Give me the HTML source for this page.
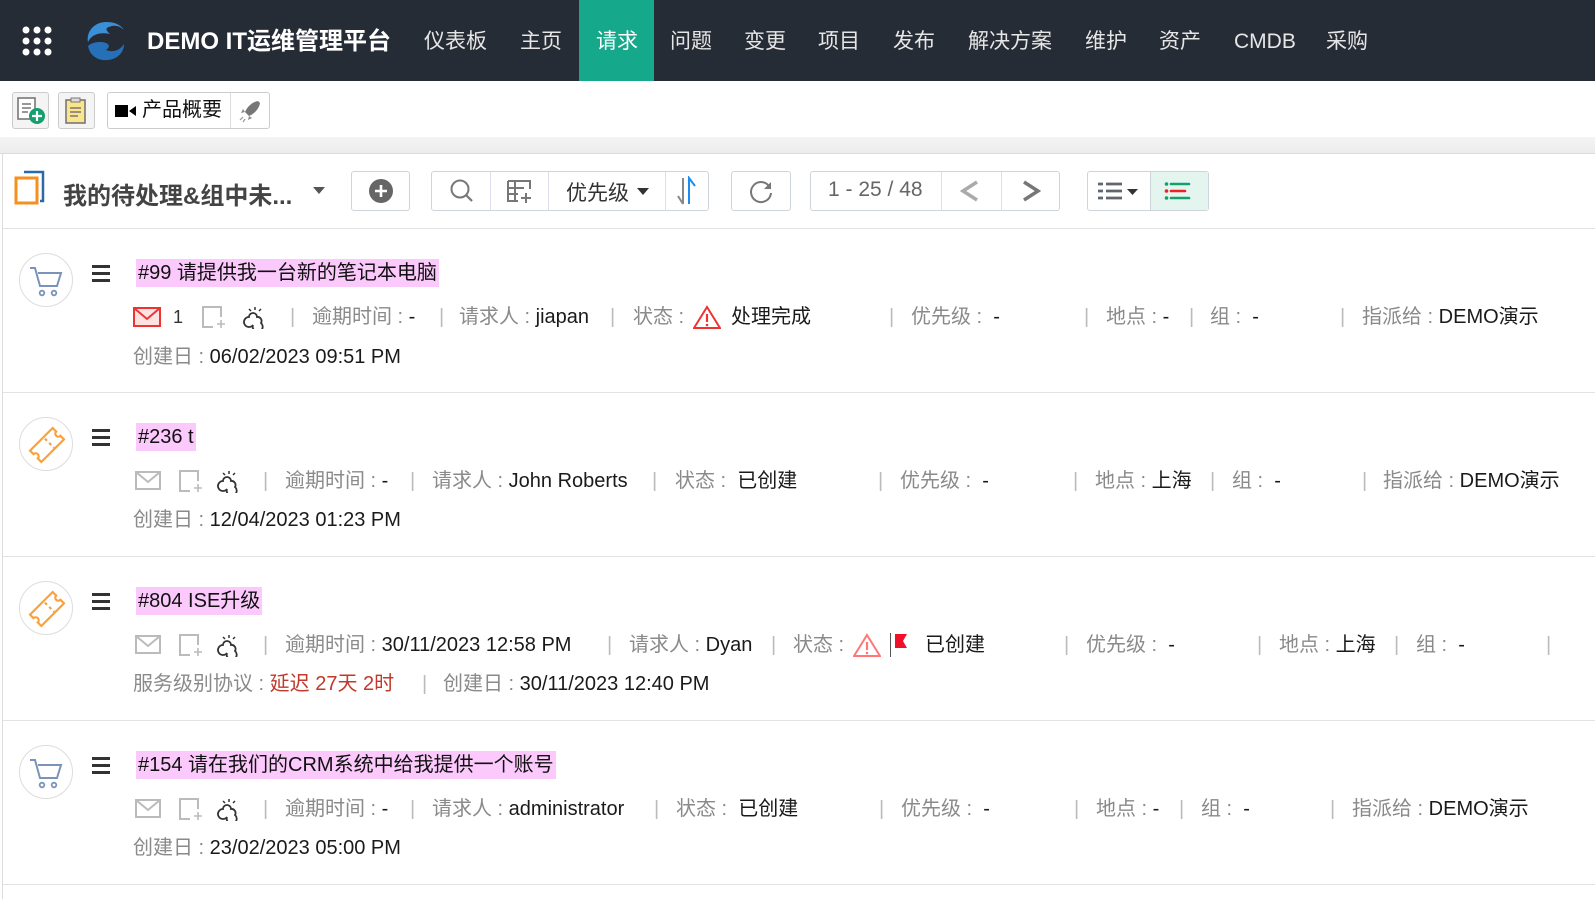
<!DOCTYPE html>
<html><head><meta charset="utf-8"><style>
*{margin:0;padding:0;box-sizing:border-box}
body{width:1595px;height:899px;overflow:hidden;background:#fff;font-family:"Liberation Sans","Noto Sans CJK SC",sans-serif;position:relative;color:#222}
.a{position:absolute;white-space:nowrap}
.nav{left:0;top:0;width:1595px;height:81px;background:#262c35}
.nv{top:0;height:81px;line-height:84px;color:#e6e6e6;font-size:21px}
.btn{position:absolute;border:1px solid #cfd4d9;border-radius:3px;background:#fff}
.m{font-size:20px;color:#8a8a8a;top:0}
.v{color:#1a1a1a}
.sep{color:#bbb}
.row{position:absolute;left:3px;width:1592px;height:164px;border-bottom:1px solid #e3e3e3}
.ic{position:absolute;left:16px;top:24px;width:54px;height:54px;border:1px solid #ddd;border-radius:50%}
.ham{position:absolute;left:89px;top:36px;width:18px}
.ham i{display:block;height:3px;background:#333;margin-bottom:4px}
.tt{position:absolute;left:133px;top:30px;background:#fbc9fb;font-size:20px;line-height:28px;padding:0 2px;color:#111}
.ln{position:absolute;left:0;height:28px;line-height:28px;width:1592px}
</style></head><body>
<div class="a nav"></div>
<svg class="a" style="left:22px;top:26px" width="30" height="30"><g fill="#fff"><circle cx="4" cy="4" r="3.5"/><circle cx="15" cy="4" r="3.5"/><circle cx="26" cy="4" r="3.5"/><circle cx="4" cy="15" r="3.5"/><circle cx="15" cy="15" r="3.5"/><circle cx="26" cy="15" r="3.5"/><circle cx="4" cy="26" r="3.5"/><circle cx="15" cy="26" r="3.5"/><circle cx="26" cy="26" r="3.5"/></g></svg>
<svg class="a" style="left:86px;top:20px" width="40" height="42"><path d="M20 2C8 2 0 12 2 22 6 14 14 12 24 14 20 10 18 8 26 6 32 5 36 8 38 10 34 4 28 2 20 2Z" fill="#3a8fd6"/><path d="M2 26C4 36 12 41 22 40 32 39 38 32 38 24 34 30 28 33 20 30 26 26 22 22 14 22 8 22 4 24 2 26Z" fill="#2670b8"/></svg>
<div class="a nv" style="left:147px;font-weight:bold;color:#fff;font-size:24px">DEMO IT运维管理平台</div>
<div class="a nv" style="left:424px">仪表板</div>
<div class="a nv" style="left:520px">主页</div>
<div class="a" style="left:579px;top:0;width:75px;height:81px;background:#15a88a"></div>
<div class="a nv" style="left:596px;color:#fff">请求</div>
<div class="a nv" style="left:670px">问题</div>
<div class="a nv" style="left:744px">变更</div>
<div class="a nv" style="left:818px">项目</div>
<div class="a nv" style="left:893px">发布</div>
<div class="a nv" style="left:968px">解决方案</div>
<div class="a nv" style="left:1085px">维护</div>
<div class="a nv" style="left:1159px">资产</div>
<div class="a nv" style="left:1234px">CMDB</div>
<div class="a nv" style="left:1326px">采购</div>

<div class="btn" style="left:12px;top:92px;width:37px;height:37px;background:#f4f4f4;border-color:#ccc"></div>
<svg class="a" style="left:16px;top:96px" width="32" height="30"><rect x="2" y="2" width="17" height="21" fill="#fff" stroke="#777" stroke-width="1.6"/><path d="M6 8h9M6 12h9M6 16h6" stroke="#777" stroke-width="1.5"/><circle cx="21" cy="20" r="8" fill="#13a06c"/><path d="M21 15v10M16 20h10" stroke="#fff" stroke-width="2.2"/></svg>
<div class="btn" style="left:58px;top:92px;width:37px;height:37px;background:#f4f4f4;border-color:#ccc"></div>
<svg class="a" style="left:64px;top:96px" width="24" height="30"><rect x="2" y="4" width="19" height="23" fill="#fbe58b" stroke="#777" stroke-width="1.6"/><rect x="7" y="2" width="9" height="4" fill="#ddd" stroke="#777"/><path d="M6 12h11M6 16h11M6 20h8" stroke="#777" stroke-width="1.5"/></svg>
<div class="btn" style="left:107px;top:92px;width:163px;height:37px;border-color:#ccc"></div>
<svg class="a" style="left:115px;top:104px" width="22" height="14"><rect x="0" y="1" width="13" height="12" fill="#000"/><path d="M14 7l7-5v10z" fill="#000"/></svg>
<div class="a" style="left:142px;top:97px;font-size:20px;line-height:26px;color:#111">产品概要</div>
<div class="a" style="left:230px;top:93px;width:1px;height:35px;background:#ddd"></div>
<svg class="a" style="left:238px;top:99px" width="24" height="24"><path d="M20 2C14 3 9 8 7 13l4 4c5-2 10-7 11-13z" fill="#777"/><path d="M7 13l-4 1 2-4zM11 17l-1 4 4-2z" fill="#888"/><path d="M5 18l-3 3M7 20l-2 3" stroke="#999" stroke-width="1.2"/></svg>

<div class="a" style="left:0;top:137px;width:1595px;height:17px;background:linear-gradient(#f4f4f4,#ececec);border-bottom:1px solid #ddd"></div>
<div class="a" style="left:2px;top:154px;width:1px;height:745px;background:#ddd"></div>

<svg class="a" style="left:14px;top:170px" width="32" height="36"><path d="M10 2h19v29h-3" fill="none" stroke="#2b6aa6" stroke-width="2.5"/><rect x="2" y="8" width="21" height="25" fill="#fff" stroke="#f5901e" stroke-width="3"/></svg>
<div class="a" style="left:63px;top:176px;font-size:24px;font-weight:bold;color:#444">我的待处理&amp;组中未...</div>
<svg class="a" style="left:313px;top:187px" width="12" height="8"><path d="M0 0h12L6 7z" fill="#555"/></svg>
<div class="btn" style="left:351px;top:171px;width:59px;height:40px"></div>
<svg class="a" style="left:368px;top:178px" width="26" height="26"><circle cx="13" cy="13" r="12" fill="#666"/><path d="M13 7v12M7 13h12" stroke="#fff" stroke-width="2.6"/></svg>
<div class="btn" style="left:431px;top:171px;width:278px;height:40px"></div>
<div class="a" style="left:490px;top:172px;width:1px;height:38px;background:#dde"></div>
<div class="a" style="left:548px;top:172px;width:1px;height:38px;background:#dde"></div>
<div class="a" style="left:665px;top:172px;width:1px;height:38px;background:#dde"></div>
<svg class="a" style="left:449px;top:178px" width="26" height="26"><circle cx="11" cy="11" r="8.5" fill="none" stroke="#777" stroke-width="2"/><path d="M17 17l6 6" stroke="#777" stroke-width="2.2"/></svg>
<svg class="a" style="left:506px;top:179px" width="28" height="26"><path d="M2 2h22v8M2 2v20h10M2 9h16M2 15h10M9 2v20" fill="none" stroke="#777" stroke-width="2"/><path d="M20 14v10M15 19h10" stroke="#777" stroke-width="2"/></svg>
<div class="a" style="left:566px;top:177px;font-size:21px;color:#333">优先级</div>
<svg class="a" style="left:637px;top:188px" width="12" height="8"><path d="M0 0h12L6 7z" fill="#333"/></svg>
<svg class="a" style="left:676px;top:176px" width="24" height="30"><path d="M7 2v26M7 28l-5-8" stroke="#888" stroke-width="2" fill="none"/><path d="M13 28V2l6 8" stroke="#1b8df0" stroke-width="2" fill="none"/></svg>
<div class="btn" style="left:731px;top:171px;width:60px;height:40px"></div>
<svg class="a" style="left:747px;top:178px" width="28" height="26"><path d="M22 8A10 10 0 1 0 24 15" fill="none" stroke="#777" stroke-width="2"/><path d="M24 4v7h-7z" fill="#777"/></svg>
<div class="btn" style="left:810px;top:171px;width:250px;height:40px"></div>
<div class="a" style="left:941px;top:172px;width:1px;height:38px;background:#dde"></div>
<div class="a" style="left:1001px;top:172px;width:1px;height:38px;background:#dde"></div>
<div class="a" style="left:828px;top:178px;font-size:21px;color:#666">1 - 25 / 48</div>
<svg class="a" style="left:959px;top:180px" width="22" height="22"><path d="M18 2L4 11l14 9" fill="none" stroke="#aaa" stroke-width="3.5"/></svg>
<svg class="a" style="left:1020px;top:180px" width="22" height="22"><path d="M4 2l14 9-14 9" fill="none" stroke="#777" stroke-width="3.5"/></svg>
<div class="btn" style="left:1087px;top:171px;width:122px;height:40px"></div>
<div class="a" style="left:1150px;top:172px;width:58px;height:38px;background:#e4f4ee;border-left:1px solid #cfd4d9"></div>
<svg class="a" style="left:1098px;top:181px" width="44" height="22"><path d="M0 3h5M8 3h16M0 10h5M8 10h16M0 17h5M8 17h16" stroke="#5f6670" stroke-width="2.8"/><path d="M29 8h11l-5.5 6z" fill="#333"/></svg>
<svg class="a" style="left:1164px;top:181px" width="28" height="22"><circle cx="2.5" cy="3" r="1.8" fill="#13a06c"/><circle cx="2.5" cy="10" r="1.8" fill="#f02020"/><circle cx="2.5" cy="17" r="1.8" fill="#13a06c"/><path d="M7 3h18M7 17h18" stroke="#13a06c" stroke-width="2.6" stroke-linecap="round"/><path d="M7 10h14" stroke="#f02020" stroke-width="2.6" stroke-linecap="round"/></svg>
<div class="a" style="left:3px;top:228px;width:1592px;height:1px;background:#e3e3e3"></div>

<!-- Row 1 -->
<div class="row" style="top:229px">
<div class="ic"><svg width="54" height="54"><path d="M10 14h5l5 18h17l4-13H18" fill="none" stroke="#7a93b8" stroke-width="2"/><circle cx="22" cy="39" r="2.3" fill="none" stroke="#7a93b8" stroke-width="1.8"/><circle cx="34" cy="39" r="2.3" fill="none" stroke="#7a93b8" stroke-width="1.8"/></svg></div>
<div class="ham"><i></i><i></i><i></i></div>
<div class="tt">#99 请提供我一台新的笔记本电脑</div>
<div class="ln" style="top:74px">
<svg class="a" style="left:130px;top:4px" width="30" height="22"><rect x="1" y="1" width="26" height="18" fill="#fde2e2" stroke="#e33" stroke-width="2"/><path d="M1 1l13 11L27 1" fill="none" stroke="#e33" stroke-width="2"/></svg>
<span class="a m" style="left:170px;color:#333;font-size:18px">1</span>
<svg class="a" style="left:198px;top:2px" width="28" height="26"><path d="M16 2H2v20h10M16 2h4v10" fill="none" stroke="#bbb" stroke-width="2"/><path d="M20 15v8M16 19h8" stroke="#bbb" stroke-width="1.6"/></svg>
<svg class="a" style="left:238px;top:2px" width="28" height="24"><path d="M8 12a5 5 0 1 0 4 8 5 5 0 1 0 8-2 4 4 0 0 0-4-6 4 4 0 0 0-8 0z" fill="none" stroke="#333" stroke-width="1.8"/><path d="M14 2v3M20 4l-2 2M8 4l2 2" stroke="#333" stroke-width="1.5"/></svg>
<span class="a m sep" style="left:287px">|</span>
<span class="a m" style="left:309px">逾期时间 : <span class="v">-</span></span>
<span class="a m sep" style="left:436px">|</span>
<span class="a m" style="left:456px">请求人 : <span class="v">jiapan</span></span>
<span class="a m sep" style="left:607px">|</span>
<span class="a m" style="left:630px">状态 :</span>
<svg class="a" style="left:690px;top:2px" width="28" height="24"><path d="M14 2L1 23h26z" fill="#fff" stroke="#e33" stroke-width="2"/><path d="M14 9v8" stroke="#e33" stroke-width="2.2"/><circle cx="14" cy="20" r="1.3" fill="#e33"/></svg>
<span class="a m v" style="left:728px">处理完成</span>
<span class="a m sep" style="left:886px">|</span>
<span class="a m" style="left:908px">优先级 :&nbsp; <span class="v">-</span></span>
<span class="a m sep" style="left:1081px">|</span>
<span class="a m" style="left:1103px">地点 : <span class="v">-</span></span>
<span class="a m sep" style="left:1186px">|</span>
<span class="a m" style="left:1207px">组 :&nbsp; <span class="v">-</span></span>
<span class="a m sep" style="left:1337px">|</span>
<span class="a m" style="left:1359px">指派给 : <span class="v">DEMO演示</span></span>
</div>
<div class="ln" style="top:114px"><span class="a m" style="left:130px">创建日 : <span class="v">06/02/2023 09:51 PM</span></span></div>
</div>

<!-- Row 2 -->
<div class="row" style="top:393px">
<div class="ic"><svg width="54" height="54"><g transform="rotate(-45 27 27)" fill="none" stroke="#f9a13c" stroke-width="2.2"><path d="M11 19h32v5a3 3 0 0 0 0 6v5H11v-5a3 3 0 0 0 0-6z"/><path d="M30 21v3M30 27v3M30 33v1" /></g></svg></div>
<div class="ham"><i></i><i></i><i></i></div>
<div class="tt">#236 t</div>
<div class="ln" style="top:74px">
<svg class="a" style="left:132px;top:4px" width="28" height="22"><rect x="1" y="1" width="24" height="17" fill="none" stroke="#bbb" stroke-width="2"/><path d="M1 1l12 10L25 1" fill="none" stroke="#bbb" stroke-width="2"/></svg>
<svg class="a" style="left:175px;top:2px" width="28" height="26"><path d="M16 2H2v20h10M16 2h4v10" fill="none" stroke="#bbb" stroke-width="2"/><path d="M20 15v8M16 19h8" stroke="#bbb" stroke-width="1.6"/></svg>
<svg class="a" style="left:212px;top:2px" width="28" height="24"><path d="M8 12a5 5 0 1 0 4 8 5 5 0 1 0 8-2 4 4 0 0 0-4-6 4 4 0 0 0-8 0z" fill="none" stroke="#333" stroke-width="1.8"/><path d="M14 2v3M20 4l-2 2M8 4l2 2" stroke="#333" stroke-width="1.5"/></svg>
<span class="a m sep" style="left:260px">|</span>
<span class="a m" style="left:282px">逾期时间 : <span class="v">-</span></span>
<span class="a m sep" style="left:407px">|</span>
<span class="a m" style="left:429px">请求人 : <span class="v">John Roberts</span></span>
<span class="a m sep" style="left:649px">|</span>
<span class="a m" style="left:672px">状态 :&nbsp; <span class="v">已创建</span></span>
<span class="a m sep" style="left:875px">|</span>
<span class="a m" style="left:897px">优先级 :&nbsp; <span class="v">-</span></span>
<span class="a m sep" style="left:1070px">|</span>
<span class="a m" style="left:1092px">地点 : <span class="v">上海</span></span>
<span class="a m sep" style="left:1207px">|</span>
<span class="a m" style="left:1229px">组 :&nbsp; <span class="v">-</span></span>
<span class="a m sep" style="left:1359px">|</span>
<span class="a m" style="left:1380px">指派给 : <span class="v">DEMO演示</span></span>
</div>
<div class="ln" style="top:113px"><span class="a m" style="left:130px">创建日 : <span class="v">12/04/2023 01:23 PM</span></span></div>
</div>

<!-- Row 3 -->
<div class="row" style="top:557px">
<div class="ic"><svg width="54" height="54"><g transform="rotate(-45 27 27)" fill="none" stroke="#f9a13c" stroke-width="2.2"><path d="M11 19h32v5a3 3 0 0 0 0 6v5H11v-5a3 3 0 0 0 0-6z"/><path d="M30 21v3M30 27v3M30 33v1" /></g></svg></div>
<div class="ham"><i></i><i></i><i></i></div>
<div class="tt">#804 ISE升级</div>
<div class="ln" style="top:74px">
<svg class="a" style="left:132px;top:4px" width="28" height="22"><rect x="1" y="1" width="24" height="17" fill="none" stroke="#bbb" stroke-width="2"/><path d="M1 1l12 10L25 1" fill="none" stroke="#bbb" stroke-width="2"/></svg>
<svg class="a" style="left:175px;top:2px" width="28" height="26"><path d="M16 2H2v20h10M16 2h4v10" fill="none" stroke="#bbb" stroke-width="2"/><path d="M20 15v8M16 19h8" stroke="#bbb" stroke-width="1.6"/></svg>
<svg class="a" style="left:212px;top:2px" width="28" height="24"><path d="M8 12a5 5 0 1 0 4 8 5 5 0 1 0 8-2 4 4 0 0 0-4-6 4 4 0 0 0-8 0z" fill="none" stroke="#333" stroke-width="1.8"/><path d="M14 2v3M20 4l-2 2M8 4l2 2" stroke="#333" stroke-width="1.5"/></svg>
<span class="a m sep" style="left:260px">|</span>
<span class="a m" style="left:282px">逾期时间 : <span class="v">30/11/2023 12:58 PM</span></span>
<span class="a m sep" style="left:604px">|</span>
<span class="a m" style="left:626px">请求人 : <span class="v">Dyan</span></span>
<span class="a m sep" style="left:768px">|</span>
<span class="a m" style="left:790px">状态 :</span>
<svg class="a" style="left:850px;top:2px" width="28" height="24"><path d="M14 2L1 23h26z" fill="#fff" stroke="#f77" stroke-width="2"/><path d="M14 9v8" stroke="#f77" stroke-width="2.2"/><circle cx="14" cy="20" r="1.3" fill="#f77"/></svg>
<div class="a" style="left:887px;top:2px;width:1px;height:24px;background:#555"></div>
<svg class="a" style="left:891px;top:2px" width="22" height="20"><path d="M1 1h12l-4 7 4 7H1z" fill="#f0102a"/></svg>
<span class="a m v" style="left:922px">已创建</span>
<span class="a m sep" style="left:1061px">|</span>
<span class="a m" style="left:1083px">优先级 :&nbsp; <span class="v">-</span></span>
<span class="a m sep" style="left:1254px">|</span>
<span class="a m" style="left:1276px">地点 : <span class="v">上海</span></span>
<span class="a m sep" style="left:1391px">|</span>
<span class="a m" style="left:1413px">组 :&nbsp; <span class="v">-</span></span>
<span class="a m sep" style="left:1543px">|</span>
</div>
<div class="ln" style="top:113px"><span class="a m" style="left:130px">服务级别协议 : <span style="color:#c0392b">延迟 27天 2时</span></span><span class="a m sep" style="left:419px">|</span><span class="a m" style="left:440px">创建日 : <span class="v">30/11/2023 12:40 PM</span></span></div>
</div>

<!-- Row 4 -->
<div class="row" style="top:721px">
<div class="ic"><svg width="54" height="54"><path d="M10 14h5l5 18h17l4-13H18" fill="none" stroke="#7a93b8" stroke-width="2"/><circle cx="22" cy="39" r="2.3" fill="none" stroke="#7a93b8" stroke-width="1.8"/><circle cx="34" cy="39" r="2.3" fill="none" stroke="#7a93b8" stroke-width="1.8"/></svg></div>
<div class="ham"><i></i><i></i><i></i></div>
<div class="tt">#154 请在我们的CRM系统中给我提供一个账号</div>
<div class="ln" style="top:74px">
<svg class="a" style="left:132px;top:4px" width="28" height="22"><rect x="1" y="1" width="24" height="17" fill="none" stroke="#bbb" stroke-width="2"/><path d="M1 1l12 10L25 1" fill="none" stroke="#bbb" stroke-width="2"/></svg>
<svg class="a" style="left:175px;top:2px" width="28" height="26"><path d="M16 2H2v20h10M16 2h4v10" fill="none" stroke="#bbb" stroke-width="2"/><path d="M20 15v8M16 19h8" stroke="#bbb" stroke-width="1.6"/></svg>
<svg class="a" style="left:212px;top:2px" width="28" height="24"><path d="M8 12a5 5 0 1 0 4 8 5 5 0 1 0 8-2 4 4 0 0 0-4-6 4 4 0 0 0-8 0z" fill="none" stroke="#333" stroke-width="1.8"/><path d="M14 2v3M20 4l-2 2M8 4l2 2" stroke="#333" stroke-width="1.5"/></svg>
<span class="a m sep" style="left:260px">|</span>
<span class="a m" style="left:282px">逾期时间 : <span class="v">-</span></span>
<span class="a m sep" style="left:407px">|</span>
<span class="a m" style="left:429px">请求人 : <span class="v">administrator</span></span>
<span class="a m sep" style="left:651px">|</span>
<span class="a m" style="left:673px">状态 :&nbsp; <span class="v">已创建</span></span>
<span class="a m sep" style="left:876px">|</span>
<span class="a m" style="left:898px">优先级 :&nbsp; <span class="v">-</span></span>
<span class="a m sep" style="left:1071px">|</span>
<span class="a m" style="left:1093px">地点 : <span class="v">-</span></span>
<span class="a m sep" style="left:1176px">|</span>
<span class="a m" style="left:1198px">组 :&nbsp; <span class="v">-</span></span>
<span class="a m sep" style="left:1327px">|</span>
<span class="a m" style="left:1349px">指派给 : <span class="v">DEMO演示</span></span>
</div>
<div class="ln" style="top:113px"><span class="a m" style="left:130px">创建日 : <span class="v">23/02/2023 05:00 PM</span></span></div>
</div>
</body></html>
